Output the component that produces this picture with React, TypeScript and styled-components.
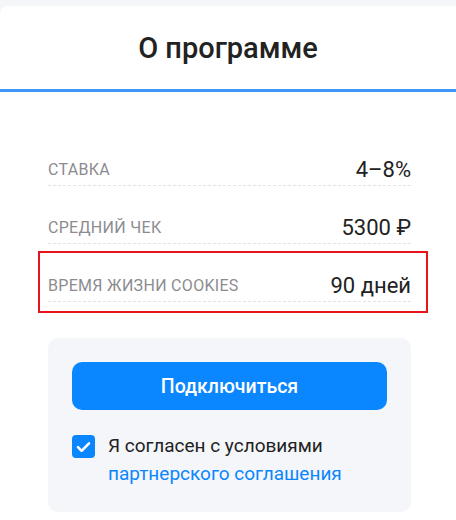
import React, { useState } from "react";
import styled, { createGlobalStyle } from "styled-components";

type Term = {
  label: string;
  value: string;
  highlighted?: boolean;
};

const terms: Term[] = [
  { label: "Ставка", value: "4–8%" },
  { label: "Средний чек", value: "5300 ₽" },
  { label: "Время жизни cookies", value: "90 дней", highlighted: true },
];

const App: React.FC = () => {
  const [agreed, setAgreed] = useState(true);

  return (
    <>
      <GlobalStyle />
      <Card>
        <Header>
          <Title>О программе</Title>
        </Header>

        <Body>
          <Terms>
            {terms.map((term) => (
              <TermRow key={term.label}>
                <TermLabel>{term.label}</TermLabel>
                <TermValue>{term.value}</TermValue>
                {term.highlighted && <Highlight />}
              </TermRow>
            ))}
          </Terms>

          <JoinPanel>
            <JoinButton type="button">Подключиться</JoinButton>

            <Agreement onClick={() => setAgreed(!agreed)}>
              <CheckBox $checked={agreed}>
                {agreed && (
                  <svg width="15" height="12" viewBox="0 0 15 12" fill="none">
                    <path
                      d="M2 6.2l3.6 3.6L13 2.4"
                      stroke="#fff"
                      strokeWidth="2.6"
                      strokeLinecap="round"
                      strokeLinejoin="round"
                    />
                  </svg>
                )}
              </CheckBox>
              <AgreementText>
                Я согласен с условиями
                <br />
                <Link href="#">партнерского соглашения</Link>
              </AgreementText>
            </Agreement>
          </JoinPanel>
        </Body>
      </Card>
    </>
  );
};

const GlobalStyle = createGlobalStyle`
  body {
    margin: 0;
    background: #f5f6f9;
    font-family: Roboto, "Noto Sans", Arial, sans-serif;
  }
`;

const Card = styled.div`
  margin-top: 6px;
  margin-right: -10px;
  min-height: 520px;
  background: #fff;
  border-radius: 8px 0 0 0;
  overflow: hidden;
`;

const Header = styled.div`
  height: 83px;
  display: flex;
  align-items: center;
  justify-content: center;
  padding-right: 10px;
  border-bottom: 3px solid #3d95f7;
`;

const Title = styled.h1`
  margin: 0;
  font-size: 29px;
  font-weight: 500;
  color: #222;
`;

const Body = styled.div`
  padding: 36px 55px 0 48px;
`;

const Terms = styled.div`
  display: flex;
  flex-direction: column;
`;

const TermRow = styled.div`
  position: relative;
  display: flex;
  align-items: center;
  justify-content: space-between;
  height: 24px;
  padding: 29px 0 4px;
  border-bottom: 1px dashed #e3e3e6;
`;

const TermLabel = styled.span`
  font-size: 16px;
  letter-spacing: 0.3px;
  text-transform: uppercase;
  color: #8c8c90;
`;

const TermValue = styled.span`
  font-size: 22px;
  color: #222;
`;

const Highlight = styled.div`
  position: absolute;
  top: 7px;
  bottom: -12px;
  left: -10px;
  right: -17px;
  border: 2px solid #e8141b;
  pointer-events: none;
`;

const JoinPanel = styled.div`
  margin-top: 36px;
  padding: 24px;
  background: #f5f6fa;
  border-radius: 10px;
`;

const JoinButton = styled.button`
  display: block;
  width: 100%;
  height: 48px;
  border: none;
  border-radius: 10px;
  background: #0a86ff;
  color: #fff;
  font-family: inherit;
  font-size: 19.5px;
  font-weight: 500;
  cursor: pointer;
`;

const Agreement = styled.label`
  display: flex;
  align-items: flex-start;
  gap: 13px;
  margin-top: 22px;
  cursor: pointer;
`;

const CheckBox = styled.span<{ $checked: boolean }>`
  flex: none;
  display: flex;
  align-items: center;
  justify-content: center;
  width: 23px;
  height: 23px;
  margin-top: 3px;
  border-radius: 4px;
  background: ${(p) => (p.$checked ? "#0a86ff" : "#fff")};
  border: ${(p) => (p.$checked ? "none" : "1px solid #c4c7cf")};
`;

const AgreementText = styled.div`
  font-size: 19px;
  line-height: 28px;
  color: #222;
`;

const Link = styled.a`
  color: #0a86ff;
  text-decoration: none;
`;

export default App;
